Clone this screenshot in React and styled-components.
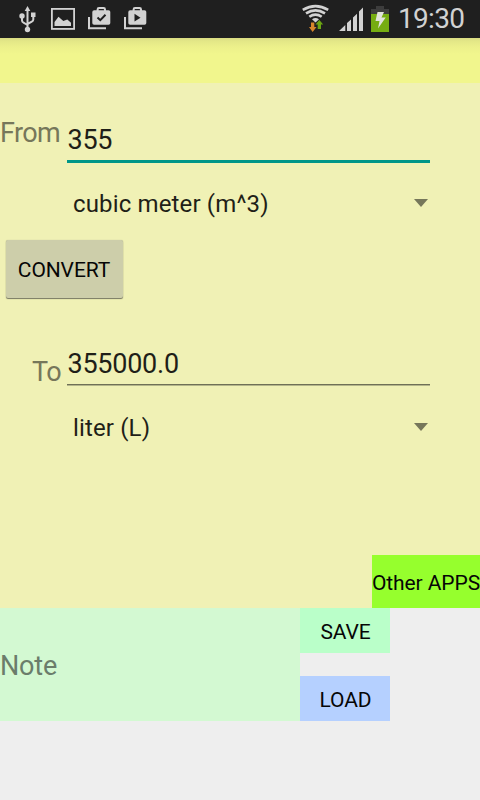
import React, { useState } from 'react';
import styled, { createGlobalStyle } from 'styled-components';

const GlobalStyle = createGlobalStyle`
body {
  margin: 0;
  background: #eeeeee;
  font-family: Roboto, 'Liberation Sans', sans-serif;
}
`

const Screen = styled.div`
display: flex;
flex-direction: column;
width: 480px;
height: 800px;
overflow: hidden;
background: #eeeeee;
`

const StatusBar = styled.header`
display: flex;
justify-content: space-between;
flex: none;
height: 38px;
background: #1f1f1f;
`

const Icons = styled.svg`
display: block;
flex: none;
`

const StatusRight = styled.div`
display: flex;
`

const Clock = styled.span`
box-sizing: border-box;
width: 82px;
color: #d2d2d2;
font-size: 28px;
line-height: 37px;
letter-spacing: -0.7px;
white-space: nowrap;
`

const ActionBar = styled.div`
flex: none;
height: 45px;
background: linear-gradient(#d9dc83 0, #e3e787 3px, #ecf08b 9px, #f1f68d 16px);
`

const Converter = styled.main`
display: flex;
flex-direction: column;
flex: none;
height: 525px;
background: #f0f1b5;
`

const Row = styled.div`
display: flex;
margin-top: ${props => props.$top}px;
`

const Label = styled.label`
box-sizing: border-box;
width: 67px;
padding-right: ${props => props.$gap}px;
padding-top: ${props => props.$drop || 0}px;
color: #76775a;
font-size: 27px;
line-height: 32px;
letter-spacing: -0.6px;
text-align: right;
white-space: nowrap;
`

const Field = styled.input`
box-sizing: border-box;
width: 363px;
height: ${props => props.$focused ? 39 : 38}px;
margin-top: ${props => props.$focused ? 7 : 0}px;
padding: 0 0 ${props => props.$focused ? 4 : 3}px 0.5px;
border: 0;
border-bottom: ${props => props.$focused ? '3px solid #009688' : '1px solid #6f7056'};
border-radius: 0;
outline: 0;
background: none;
box-shadow: ${props => props.$focused ? 'none' : '0 1px 0 #b4b58a'};
color: #1f1f18;
font: 27px/32px Roboto, 'Liberation Sans', sans-serif;
letter-spacing: -0.25px;
`

const Spinner = styled.div`
display: flex;
align-items: center;
justify-content: space-between;
width: 355px;
height: 32px;
margin: ${props => props.$top}px 0 0 73px;
color: #1f1f18;
font-size: 24px;
line-height: 30px;
letter-spacing: 0.15px;
white-space: nowrap;
`

const Unit = styled.span`
padding-top: 2px;
`

const Arrow = styled.i`
border: solid transparent;
border-width: 8px 7px 0;
border-top-color: #76775a;
`

const Button = styled.button`
flex: none;
width: ${props => props.$width}px;
height: ${props => props.$height}px;
padding: 2px 0 0;
border: 0;
background: ${props => props.$color};
color: #060606;
font: 21px/24px Roboto, 'Liberation Sans', sans-serif;
letter-spacing: -0.1px;
white-space: nowrap;
`

const ConvertButton = styled(Button)`
margin: 21px 0 0 6px;
padding-right: 1px;
border-radius: 2px;
box-shadow: 0 1px 1px #777762, 0 0 1px #b4b595;
`

const OtherButton = styled(Button)`
align-self: flex-end;
margin-top: auto;
`

const NoteButton = styled(Button)`
padding-left: 1px;
`

const Notes = styled.section`
display: flex;
height: 113px;
`

const Note = styled.textarea`
box-sizing: border-box;
width: 300px;
height: 113px;
padding: 42px 0 0;
border: 0;
outline: 0;
resize: none;
overflow: hidden;
background: #d3f9d2;
color: #6b7d6b;
font: 27px/32px Roboto, 'Liberation Sans', sans-serif;
letter-spacing: -0.2px;
&::placeholder {
  color: #6b7d6b;
  opacity: 1;
}
`

const NoteButtons = styled.div`
display: flex;
flex-direction: column;
justify-content: space-between;
`

const Notifications = () => (
  <Icons width="160" height="38" fill="#d2d2d2">
    {/* usb */}
    <path d="M27.5 6l2.800 5h-5.600z" />
    <circle cx="27.5" cy="29.500" r="2.700" />
    <circle cx="22" cy="16" r="2.700" />
    <rect x="31" y="12.500" width="4.500" height="4.500" />
    <path d="M27.5 10v19M22 17v3.500q0 1.500 1.500 2.200l4 2.300M33.300 16v3.500q0 1.500-1.500 2.200l-4.300 2.300" fill="none" stroke="#d2d2d2" strokeWidth="2" />
    {/* picture */}
    <rect x="51.900" y="8.900" width="22.200" height="20" fill="none" stroke="#d2d2d2" strokeWidth="1.800" />
    <path d="M54.500 26v-4l4-5.300 4.800 4.300 4-1.500 3.700 3.200V26z" />
    {/* shopping bags */}
    {[0, 36].map(x => (
      <g key={x} transform={`translate(${x} 0)`}>
        <path d="M89 17v11.200h17" fill="none" stroke="#d2d2d2" strokeWidth="2" />
        <path d="M97.600 11.500V9.500q0-1.400 1.400-1.400h4.600q1.400 0 1.400 1.400v2" fill="none" stroke="#d2d2d2" strokeWidth="2" />
        <rect x="92.300" y="10.300" width="18" height="14.500" rx="1.800" />
      </g>
    ))}
    <path d="M97.500 17.500l2.800 2.700 5.200-5.400" fill="none" stroke="#1f1f1f" strokeWidth="2" />
    <path d="M134.500 13.800l6 3.900-6 3.900z" fill="#1f1f1f" />
  </Icons>
)

const Signals = () => (
  <Icons width="98" height="38" fill="#d2d2d2">
    {/* wifi with traffic arrows */}
    <g fill="none" stroke="#d2d2d2" strokeWidth="2.600">
      <path d="M2.800 9.800q12.700-7.400 25.400 0" />
      <path d="M6 13.400q9.500-6 19 0" />
      <path d="M9.300 16.800q6.200-4.400 12.400 0" />
    </g>
    <path d="M12 19.200q3.500-2.200 7 0L15.500 22.500z" />
    <path d="M11 22.500h3.300v4.500h2.200L12.650 32 9 27h2z" fill="#d8862b" />
    <path d="M17.700 29H21v-4.500h2.200L19.350 20l-3.850 4.500h2.200z" fill="#6ba512" />
    {/* signal */}
    <path d="M39 31l6.300-6V31zM47 23l4-3.500V31h-4zM53 17.500l4-3.700V31h-4zM59 11.500l4-4V31h-4z" />
    {/* battery */}
    <path d="M76 6h8v3h5v5H71V9h5z" fill="#3d3d3d" />
    <rect x="71" y="14" width="18" height="18" fill="#76ad12" />
    <path d="M77.500 12h6.500l-2.500 5.500h4.200L78 28.500l1.500-7.500h-4z" fill="#e1e3dc" />
  </Icons>
)

const App = () => {
  const [from, setFrom] = useState('355');
  const [to, setTo] = useState('355000.0');
  const [note, setNote] = useState('');

  const handleConvert = () => {
    setTo((Number(from) * 1000).toFixed(1));
  }

  return (
    <>
      <GlobalStyle />
      <Screen>
        <StatusBar>
          <Notifications />
          <StatusRight>
            <Signals />
            <Clock>19:30</Clock>
          </StatusRight>
        </StatusBar>
        <ActionBar />
        <Converter>
          <Row $top={34}>
            <Label $gap={7}>From</Label>
            <Field $focused value={from} onChange={(e) => setFrom(e.target.value)} />
          </Row>
          <Spinner $top={24}>
            <Unit>cubic meter (m^3)</Unit>
            <Arrow />
          </Spinner>
          <ConvertButton $width={117} $height={58} $color="#cdceaa" onClick={handleConvert}>CONVERT</ConvertButton>
          <Row $top={49}>
            <Label $gap={6} $drop={9}>To</Label>
            <Field value={to} readOnly />
          </Row>
          <Spinner $top={23}>
            <Unit>liter (L)</Unit>
            <Arrow />
          </Spinner>
          <OtherButton $width={108} $height={53} $color="#96ff2d">Other APPS</OtherButton>
        </Converter>
        <Notes>
          <Note placeholder="Note" value={note} onChange={(e) => setNote(e.target.value)} />
          <NoteButtons>
            <NoteButton $width={90} $height={45} $color="#baffc9">SAVE</NoteButton>
            <NoteButton $width={90} $height={45} $color="#b5d0ff">LOAD</NoteButton>
          </NoteButtons>
        </Notes>
      </Screen>
    </>)
}

export default App;
